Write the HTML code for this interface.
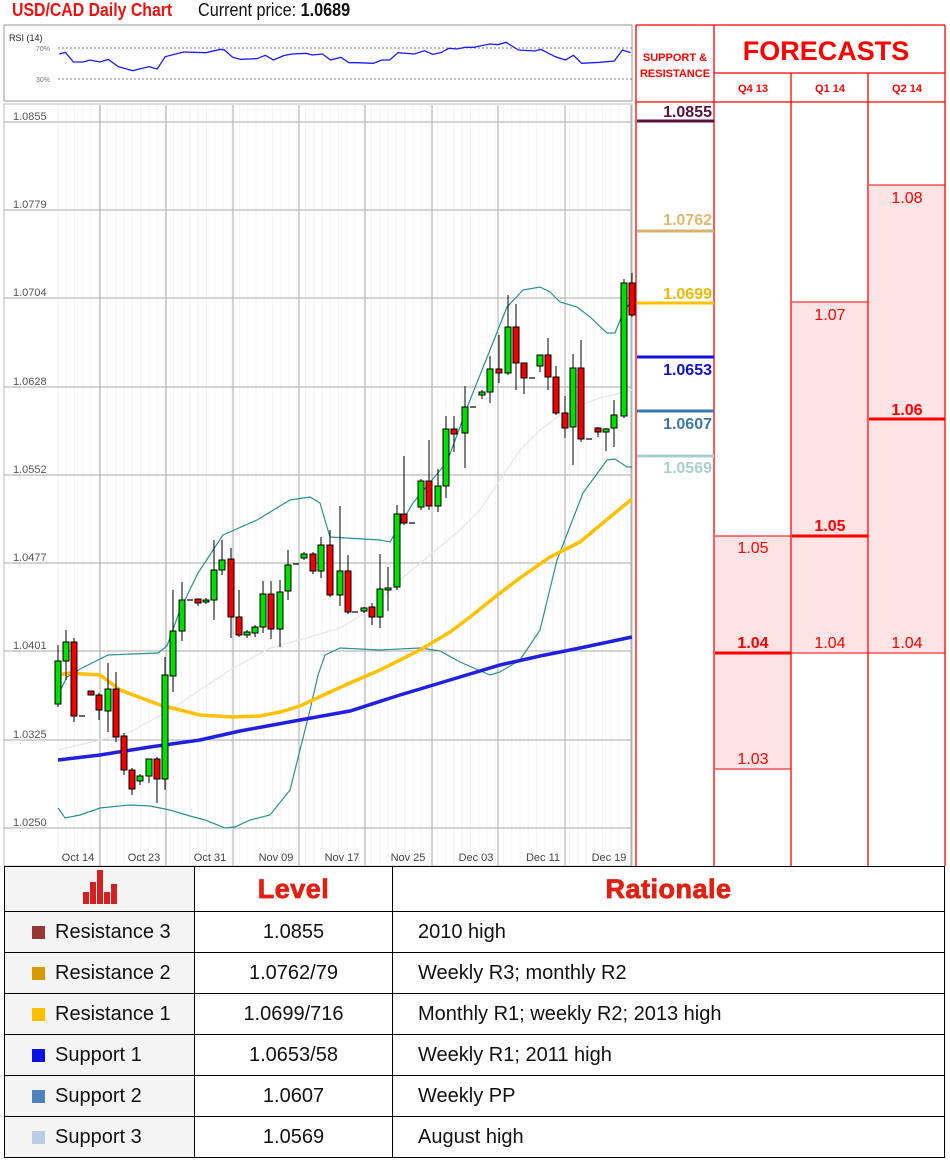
<!DOCTYPE html>
<html><head><meta charset="utf-8">
<style>
body{margin:0;width:950px;height:1162px;background:#fff;overflow:hidden;font-family:"Liberation Sans",sans-serif;position:relative}
.abs{position:absolute}
table{position:absolute;left:4px;top:866px;border-collapse:collapse;width:941px;table-layout:fixed}
td{border:1.5px solid #000;height:40px;font-size:20px;color:#111;padding:0}
tr.h td{height:44px}
td.c1{background:#f4f4f4;padding-left:27px}
td.c2{text-align:center}
td.c3{padding-left:25px}
.sq{display:inline-block;width:13px;height:13px;margin-right:10px;vertical-align:-1px}
.hd{font-family:"Liberation Sans",sans-serif;font-weight:900;color:#e02010;font-size:27px;text-align:center;letter-spacing:0.5px;-webkit-text-stroke:0.8px #e02010}
</style></head><body>
<div class="abs" style="left:12px;top:0px;font-size:18px;font-weight:bold;color:#f01010;transform:scaleX(0.88);transform-origin:left">USD/CAD Daily Chart</div>
<div class="abs" style="left:198px;top:0px;font-size:18px;color:#111;transform:scaleX(0.9);transform-origin:left">Current price: <b>1.0689</b></div>

<svg class="abs" style="left:0;top:0" width="950" height="866" id="s">
<rect x="4" y="25" width="628" height="76" fill="#fff" stroke="#999"/>
<text x="9" y="41" font-size="9" fill="#222">RSI (14)</text>
<text x="36" y="51" font-size="7" fill="#777">70%</text>
<text x="36" y="82" font-size="7" fill="#777">30%</text>
<line x1="58" y1="48" x2="632" y2="48" stroke="#555" stroke-dasharray="2,2" stroke-width="0.7"/>
<line x1="58" y1="79" x2="632" y2="79" stroke="#555" stroke-dasharray="2,2" stroke-width="0.7"/>
<g transform="scale(0.40816,0.33333)"><polyline fill="none" stroke="#1a1aff" stroke-width="1.3" vector-effect="non-scaling-stroke" points="145,162 160,157 180,186 205,186 220,180 245,186 265,178 290,200 325,212 365,200 385,207 405,170 450,156 505,158 540,148 550,150 570,172 590,178 630,176 650,166 670,180 695,167 715,162 750,160 765,165 790,162 810,180 835,172 855,188 875,188 915,190 935,180 955,180 975,158 1015,162 1040,152 1060,163 1080,158 1100,145 1120,147 1140,142 1160,142 1200,132 1220,134 1240,127 1270,150 1310,153 1325,148 1360,170 1385,180 1405,166 1425,190 1470,187 1505,183 1525,150 1545,158"/></g>
<rect x="4" y="104" width="628" height="762" fill="#fff" stroke="#bbb"/>
<g id="grid"></g>
<g font-size="11" fill="#555">
<text x="13" y="120">1.0855</text><text x="13" y="208">1.0779</text><text x="13" y="296">1.0704</text><text x="13" y="385">1.0628</text><text x="13" y="473">1.0552</text><text x="13" y="561">1.0477</text><text x="13" y="649">1.0401</text><text x="13" y="738">1.0325</text><text x="13" y="826">1.0250</text>
</g>
<g font-size="11" fill="#444" text-anchor="middle">
<text x="78" y="861">Oct 14</text><text x="144" y="861">Oct 23</text><text x="210" y="861">Oct 31</text><text x="276" y="861">Nov 09</text><text x="342" y="861">Nov 17</text><text x="408" y="861">Nov 25</text><text x="476" y="861">Dec 03</text><text x="543" y="861">Dec 11</text><text x="609" y="861">Dec 19</text>
</g>
<polyline fill="none" stroke="#e6e6e6" stroke-width="1.2" points="58,750 100,740 130,732 170,710 200,690 230,670 270,648 300,640 340,628 370,610 400,580 430,555 460,530 480,510 500,480 520,450 540,430 560,415 580,405 600,398 620,393 632,390"/>
<polyline fill="none" stroke="#2a9090" stroke-width="1.2" points="58,695 67,677 82,668 100,659 108,655 158,653 167,646 180,610 198,573 223,535 257,520 290,500 310,497 320,503 330,537 380,540 390,542 413,503 447,462 470,400 490,350 507,307 523,290 540,287 550,292 560,302 577,307 590,317 607,333 615,333 623,313 632,300"/>
<polyline fill="none" stroke="#2a9090" stroke-width="1.2" points="58,808 65,818 80,815 100,808 130,805 150,806 170,810 190,816 205,820 225,828 235,827 250,820 270,815 290,790 300,750 310,710 318,675 325,655 340,648 380,650 420,648 440,651 460,662 490,675 500,672 520,660 540,630 557,560 583,493 607,460 615,459 627,467 632,467"/>
<polyline fill="none" stroke="#ffc000" stroke-width="3.5" points="58,675 70,673 100,675 120,690 160,705 200,715 233,717 260,716 280,712 300,706 330,692 350,683 380,670 420,650 450,632 470,617 500,593 520,578 550,557 580,542 610,517 632,499"/>
<polyline fill="none" stroke="#2020e0" stroke-width="3.5" points="58,760 100,755 150,747 200,740 240,731 300,720 350,711 400,695 450,680 500,665 540,656 580,648 632,637"/>
<g id="cnd"></g>

<rect x="715" y="536" width="76" height="233" fill="#fde4e4"/>
<rect x="792" y="302" width="76" height="351" fill="#fde4e4"/>
<rect x="869" y="185" width="76" height="468" fill="#fde4e4"/>
<g stroke="#f00" stroke-width="1.3">
<line x1="636" y1="25" x2="636" y2="866"/><line x1="714" y1="25" x2="714" y2="866"/><line x1="791" y1="73" x2="791" y2="866"/><line x1="868" y1="73" x2="868" y2="866"/><line x1="945" y1="25" x2="945" y2="866"/>
<line x1="636" y1="25" x2="945" y2="25"/><line x1="714" y1="73" x2="945" y2="73"/><line x1="636" y1="102" x2="945" y2="102"/>
<line x1="715" y1="536" x2="791" y2="536" stroke-width="1"/><line x1="715" y1="769" x2="791" y2="769" stroke-width="1"/>
<line x1="792" y1="302" x2="868" y2="302" stroke-width="1"/><line x1="869" y1="185" x2="945" y2="185" stroke-width="1"/>
<line x1="715" y1="653" x2="945" y2="653" stroke-width="1"/>
<line x1="715" y1="653" x2="791" y2="653" stroke-width="3"/>
<line x1="792" y1="536" x2="868" y2="536" stroke-width="3"/>
<line x1="869" y1="419" x2="945" y2="419" stroke-width="3"/>
</g>
<g fill="#f00" font-weight="bold" text-anchor="middle">
<text x="675" y="61" font-size="11">SUPPORT &amp;</text><text x="675" y="77" font-size="11">RESISTANCE</text>
<text x="826" y="60" font-size="27">FORECASTS</text>
<text x="753" y="92" font-size="11">Q4 13</text><text x="830" y="92" font-size="11">Q1 14</text><text x="907" y="92" font-size="11">Q2 14</text>
</g>
<g fill="#f00" font-size="16" text-anchor="middle">
<text x="753" y="553">1.05</text><text x="753" y="648" font-weight="bold">1.04</text><text x="753" y="764">1.03</text>
<text x="830" y="320">1.07</text><text x="830" y="531" font-weight="bold">1.05</text><text x="830" y="648">1.04</text>
<text x="907" y="203">1.08</text><text x="907" y="415" font-weight="bold">1.06</text><text x="907" y="648">1.04</text>
</g>
<g font-size="16" font-weight="bold" text-anchor="end">
<text x="712" y="117" fill="#5a1040">1.0855</text><line x1="637" y1="121" x2="714" y2="121" stroke="#5a1040" stroke-width="3"/>
<text x="712" y="225" fill="#e0b870">1.0762</text><line x1="637" y1="231" x2="714" y2="231" stroke="#d8b070" stroke-width="3"/>
<text x="712" y="299" fill="#f0b800">1.0699</text><line x1="637" y1="303" x2="714" y2="303" stroke="#ffc000" stroke-width="3"/>
<text x="712" y="375" fill="#1010d0">1.0653</text><line x1="637" y1="357" x2="714" y2="357" stroke="#1010e0" stroke-width="3"/>
<text x="712" y="429" fill="#3a78a8">1.0607</text><line x1="637" y1="411" x2="714" y2="411" stroke="#3a78a8" stroke-width="3"/>
<text x="712" y="473" fill="#a8d0d0">1.0569</text><line x1="637" y1="456" x2="714" y2="456" stroke="#a8d0d0" stroke-width="3"/>
</g>
</svg>

<table>
<colgroup><col style="width:190px"><col style="width:198px"><col></colgroup>
<tr class="h"><td class="c1" style="text-align:center;padding-left:0">
<svg width="36" height="36" viewBox="0 0 36 36"><g fill="#d42020"><rect x="1" y="24" width="6" height="12"/><rect x="8" y="14" width="6" height="22"/><rect x="15" y="2" width="6" height="34"/><rect x="22" y="24" width="6" height="12"/><rect x="29" y="16" width="6" height="20"/></g></svg>
</td><td class="c2 hd">Level</td><td class="hd">Rationale</td></tr>
<tr><td class="c1"><span class="sq" style="background:#953735"></span>Resistance 3</td><td class="c2">1.0855</td><td class="c3">2010 high</td></tr>
<tr><td class="c1"><span class="sq" style="background:#d49a00"></span>Resistance 2</td><td class="c2">1.0762/79</td><td class="c3">Weekly R3; monthly R2</td></tr>
<tr><td class="c1"><span class="sq" style="background:#ffc000"></span>Resistance 1</td><td class="c2">1.0699/716</td><td class="c3">Monthly R1; weekly R2; 2013 high</td></tr>
<tr><td class="c1"><span class="sq" style="background:#0a10e0"></span>Support 1</td><td class="c2">1.0653/58</td><td class="c3">Weekly R1; 2011 high</td></tr>
<tr><td class="c1"><span class="sq" style="background:#4f81bd"></span>Support 2</td><td class="c2">1.0607</td><td class="c3">Weekly PP</td></tr>
<tr><td class="c1"><span class="sq" style="background:#b9cde5"></span>Support 3</td><td class="c2">1.0569</td><td class="c3">August high</td></tr>
</table>

<script>
var NS="http://www.w3.org/2000/svg";
function el(p,t,a){var e=document.createElementNS(NS,t);for(var k in a)e.setAttribute(k,a[k]);p.appendChild(e);return e;}
var g=document.getElementById("grid");
for(var x=58;x<632;x+=8.25)el(g,"line",{x1:x,y1:105,x2:x,y2:866,stroke:"#f3f3f3","stroke-width":1});
[100,166,233,299,365,432,498,565,631].forEach(function(x){el(g,"line",{x1:x,y1:105,x2:x,y2:866,stroke:"#aaa","stroke-width":1});});
[122,210,298,387,475,563,651,740,828].forEach(function(y){el(g,"line",{x1:4,y1:y,x2:632,y2:y,stroke:"#aaa","stroke-width":1});});
var C=[[58,"g",661,704,645,707],[66,"g",642,661,630,680],[74,"r",642,716,638,722],[82,"d",716,716,716,716],[91,"r",691,695,691,695],[99,"r",695,710,693,720],[108,"g",689,711,663,732],[116,"r",689,737,672,742],[124,"r",736,770,733,775],[132,"r",770,789,768,795],[140,"g",776,781,774,785],[149,"g",759,776,759,783],[157,"r",759,779,757,803],[165,"g",675,779,657,790],[173,"g",631,676,590,692],[182,"g",600,631,582,641],[190,"d",600,600,600,600],[198,"r",599,603,599,606],[206,"g",600,602,598,604],[214,"g",570,600,540,620],[222,"g",560,570,540,575],[231,"r",559,617,548,638],[239,"r",617,635,590,637],[247,"g",632,635,630,638],[255,"g",627,633,625,637],[263,"g",594,627,581,633],[271,"r",594,629,581,639],[280,"g",592,629,580,647],[288,"g",565,591,550,600],[296,"d",564,564,564,564],[304,"g",554,558,552,560],[313,"r",554,571,552,574],[321,"g",545,571,537,578],[330,"r",545,595,530,597],[340,"g",571,595,506,606],[348,"r",571,612,555,614],[355,"d",612,612,612,612],[364,"g",608,611,607,613],[372,"r",607,617,603,625],[380,"g",589,617,554,628],[388,"g",588,590,567,611],[397,"g",514,587,505,590],[404,"r",514,523,456,525],[412,"d",523,523,523,523],[421,"g",481,507,479,510],[429,"r",481,506,440,510],[438,"g",486,506,469,512],[446,"g",429,486,416,498],[454,"r",429,434,416,452],[465,"g",407,433,386,468],[473,"d",407,407,407,407],[482,"g",392,395,390,399],[490,"g",369,392,356,403],[499,"r",369,373,335,383],[508,"g",327,373,295,375],[516,"r",327,363,304,390],[524,"r",363,378,363,394],[532,"d",378,378,378,378],[540,"g",355,366,355,372],[548,"r",355,377,338,390],[556,"r",377,413,366,415],[565,"r",413,428,396,438],[573,"g",368,427,354,465],[581,"r",368,439,340,442],[589,"d",439,439,439,439],[598,"r",428,432,427,437],[606,"g",429,432,428,451],[614,"g",415,428,400,447],[624,"g",283,416,279,418],[632,"r",283,315,273,317]];
var cg=document.getElementById("cnd");
C.forEach(function(c){var x=c[0];
el(cg,"line",{x1:x,y1:c[4],x2:x,y2:c[5],stroke:"#000","stroke-width":1});
if(c[1]=="d"){el(cg,"line",{x1:x-3,y1:c[2],x2:x+3,y2:c[2],stroke:"#000","stroke-width":1.2});return;}
el(cg,"rect",{x:x-3,y:c[2],width:6,height:Math.max(2,c[3]-c[2]),fill:c[1]=="g"?"#00e000":"#f00000",stroke:"#000","stroke-width":1});});
</script>
</body></html>
